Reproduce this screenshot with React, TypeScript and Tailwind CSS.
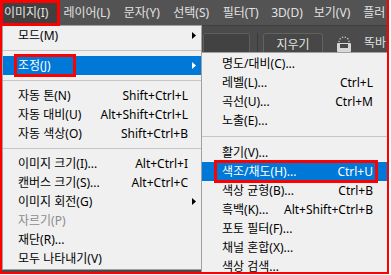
import React from 'react';

const FONT = { fontFamily: '"Noto Sans", "Noto Sans CJK KR", sans-serif' };

type Entry =
  | { sep: true }
  | { label: string; shortcut?: string; arrow?: boolean; disabled?: boolean; active?: boolean };

const mainMenu: Entry[] = [
  { label: '모드(M)', arrow: true },
  { sep: true },
  { label: '조정(J)', arrow: true, active: true },
  { sep: true },
  { label: '자동 톤(N)', shortcut: 'Shift+Ctrl+L' },
  { label: '자동 대비(U)', shortcut: 'Alt+Shift+Ctrl+L' },
  { label: '자동 색상(O)', shortcut: 'Shift+Ctrl+B' },
  { sep: true },
  { label: '이미지 크기(I)...', shortcut: 'Alt+Ctrl+I' },
  { label: '캔버스 크기(S)...', shortcut: 'Alt+Ctrl+C' },
  { label: '이미지 회전(G)', arrow: true },
  { label: '자르기(P)', disabled: true },
  { label: '재단(R)...' },
  { label: '모두 나타내기(V)' },
];

const subMenu: Entry[] = [
  { label: '명도/대비(C)...' },
  { label: '레벨(L)...', shortcut: 'Ctrl+L' },
  { label: '곡선(U)...', shortcut: 'Ctrl+M' },
  { label: '노출(E)...' },
  { sep: true },
  { label: '활기(V)...' },
  { label: '색조/채도(H)...', shortcut: 'Ctrl+U', active: true },
  { label: '색상 균형(B)...', shortcut: 'Ctrl+B' },
  { label: '흑백(K)...', shortcut: 'Alt+Shift+Ctrl+B' },
  { label: '포토 필터(F)...' },
  { label: '채널 혼합(X)...' },
  { label: '색상 검색...' },
];

const topItems = [
  { label: '이미지(I)', w: 'w-[60px]', on: true },
  { label: '레이어(L)', w: 'w-[61px]' },
  { label: '문자(Y)', w: 'w-[50px]' },
  { label: '선택(S)', w: 'w-[50px]' },
  { label: '필터(T)', w: 'w-[49px]' },
  { label: '3D(D)', w: 'w-[43px]' },
  { label: '보기(V)', w: 'w-[50px]' },
  { label: '플러', w: 'w-[30px]' },
];

function Arrow({ white }: { white?: boolean }) {
  return (
    <svg width="4" height="7" viewBox="0 0 4 7" className="absolute right-[5px] top-[6px]">
      <path d="M0 0 L4 3.5 L0 7 Z" fill={white ? '#ffffff' : '#000000'} />
    </svg>
  );
}

function MenuList({ items, pl, pr, sepH }: { items: Entry[]; pl: string; pr: string; sepH: string }) {
  return (
    <>
      {items.map((it, i) =>
        'sep' in it ? (
          <div key={i} className={`${sepH} flex items-center`}>
            <div className="h-px w-full bg-[#c6c6c6]" />
          </div>
        ) : (
          <div
            key={i}
            className={`relative flex h-[19px] items-center justify-between whitespace-nowrap text-[12px] ${pl} ${pr} ${
              it.active ? 'bg-[#0078d7] text-white' : it.disabled ? 'text-[#8c8c8c]' : 'text-black'
            }`}
          >
            <span>{it.label}</span>
            {it.shortcut && <span>{it.shortcut}</span>}
            {it.arrow && <Arrow white={it.active} />}
          </div>
        )
      )}
    </>
  );
}

export default function App() {
  return (
    <div className="w-[391px] h-[275px] bg-white" style={FONT}>
      <div className="relative w-[389px] h-[274px] overflow-hidden bg-[#4b4b4b]">
        {/* menu bar */}
        <div className="flex h-[26px] items-center bg-[#535353] text-[12px] text-[#e2e2e2] border-b border-[#3e3e3e]">
          {topItems.map((t) => (
            <div key={t.label} className={`${t.w} h-full flex items-center pl-[4px] whitespace-nowrap ${t.on ? 'bg-[#404040]' : ''}`}>
              {t.label}
            </div>
          ))}
        </div>

        {/* options bar */}
        <div className="flex h-[30px] items-start pt-[7px] pl-[203px]">
          <div className="w-[47px] h-[24px] rounded-[2px] border border-[#5e5e5e] bg-[#424242]" />
          <div className="w-px h-[22px] bg-[#3a3a3a] ml-[7px]" />
          <div className="ml-[5px] w-[60px] h-[24px] rounded-[3px] border border-[#626262] bg-[#474747] flex items-center justify-center text-[12px] text-[#e2e2e2]">
            지우기
          </div>
          <svg width="16" height="18" viewBox="0 0 16 18" className="ml-[13px] mt-[2px]">
            <path d="M3 7 A5 5 0 0 1 13 7" fill="none" stroke="#d8d8d8" strokeWidth="1.2" strokeDasharray="1.2 1.6" />
            <rect x="1" y="8" width="14" height="9" rx="1" fill="#d8d8d8" />
            <rect x="4" y="9" width="8" height="4" fill="#4b4b4b" />
          </svg>
          <span className="ml-[12px] text-[12px] text-[#e2e2e2] leading-[20px] whitespace-nowrap">똑바</span>
        </div>

        {/* image menu */}
        <div className="absolute left-[2px] top-[25px] w-[200px] h-[245px] bg-[#f0f0f0] border border-[#a0a0a0]">
          <MenuList items={mainMenu} pl="pl-[15px]" pr="pr-[13px]" sepH="h-[11px]" />
        </div>

        {/* adjustments submenu */}
        <div className="absolute left-[201px] top-[52px] w-[190px] h-[240px] bg-[#f0f0f0] border border-[#a0a0a0] pt-px">
          <MenuList items={subMenu} pl="pl-[20px]" pr="pr-[17px]" sepH="h-[13px]" />
        </div>

        {/* annotation boxes */}
        <div className="absolute left-0 top-0 w-[60px] h-[26px] border-[3px] border-[#ff0000]" />
        <div className="absolute left-[14px] top-[54px] w-[62px] h-[23px] border-[3px] border-[#ff0000]" />
        <div className="absolute left-[214px] top-[160px] w-[164px] h-[23px] border-[3px] border-[#ff0000]" />
        <div className="absolute left-0 top-0 w-[389px] h-[274px] border-l-2 border-r-2 border-b-2 border-[#ff0000]" />
      </div>
    </div>
  );
}
